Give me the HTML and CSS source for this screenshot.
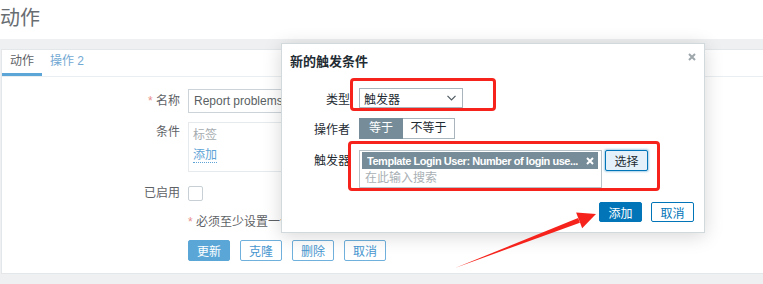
FILE: index.html
```html
<!DOCTYPE html>
<html lang="zh-CN">
<head>
  <meta charset="UTF-8" />
  <title>动作</title>
  <link rel="stylesheet" href="styles.css">
</head>
<body>

  <header class="page-header">
    <h1>动作</h1>
  </header>

  <div class="card">
    <ul class="tabs">
      <li class="tab active">动作</li>
      <li class="tab">操作 2</li>
    </ul>

    <div class="form">
      <div class="form-row">
        <label class="form-label"><span class="asterisk">*</span> 名称</label>
        <div class="text-input">Report problems to Zabbix administrators</div>
      </div>

      <div class="form-row top">
        <label class="form-label">条件</label>
        <div class="cond-box">
          <div class="cond-head">标签</div>
          <div><a class="link-dotted">添加</a></div>
        </div>
      </div>

      <div class="form-row">
        <label class="form-label">已启用</label>
        <span class="checkbox"></span>
      </div>

      <div class="form-row note-row">
        <span class="form-label"></span>
        <span class="note"><span class="asterisk">*</span> 必须至少设置一个执行内容。</span>
      </div>

      <div class="form-row">
        <span class="form-label"></span>
        <div class="btn-row">
          <button class="btn btn-main">更新</button>
          <button class="btn btn-alt">克隆</button>
          <button class="btn btn-alt">删除</button>
          <button class="btn btn-alt">取消</button>
        </div>
      </div>
    </div>
  </div>

  <!-- dialog over the page -->
  <div class="modal">
    <div class="modal-head">
      <h2>新的触发条件</h2>
      <button class="close" title="关闭">
        <svg width="8" height="8" viewBox="0 0 8 8"><path d="M1 1L7 7M7 1L1 7" stroke="#9ea7ac" stroke-width="2"/></svg>
      </button>
    </div>

    <div class="modal-form">
      <label class="m-label">类型</label>
      <div class="select">
        <span>触发器</span>
        <svg width="9" height="6" viewBox="0 0 9 6"><path d="M0.5 0.8L4.5 4.8L8.5 0.8" fill="none" stroke="#4f5a60" stroke-width="1.2"/></svg>
      </div>

      <label class="m-label">操作者</label>
      <div class="segmented">
        <span class="seg on">等于</span>
        <span class="seg seg-wide">不等于</span>
      </div>

      <label class="m-label top">触发器</label>
      <div class="ms-row">
        <div class="multiselect">
          <div class="ms-tag">
            <span class="ms-text">Template Login User: Number of login use...</span>
            <svg width="8" height="8" viewBox="0 0 8 8"><path d="M1 1L7 7M7 1L1 7" stroke="#fff" stroke-width="2"/></svg>
          </div>
          <div class="ms-placeholder">在此输入搜索</div>
        </div>
        <button class="btn btn-select">选择</button>
      </div>
    </div>

    <div class="modal-foot">
      <button class="btn btn-primary">添加</button>
      <button class="btn btn-outline">取消</button>
    </div>

    <div class="mark mark-type"></div>
    <div class="mark mark-trigger"></div>
  </div>

  <svg class="arrow" width="763" height="284" viewBox="0 0 763 284">
    <polygon points="455,268 579.9,222.7 578.1,218.1" fill="#f5231c"/>
    <polygon points="596,214 576.1,212.4 582.2,228.2" fill="#f5231c"/>
  </svg>

</body>
</html>
```

FILE: styles.css
```css
* { box-sizing: border-box; }

body {
  margin: 0;
  width: 763px;
  height: 284px;
  overflow: hidden;
  position: relative;
  background: #eef0f2;
  font-family: "Liberation Sans", "Noto Sans CJK SC", sans-serif;
  font-size: 12px;
  color: #5e6266;
}

button {
  font-family: inherit;
  font-size: 12px;
}

.page-header {
  height: 39px;
  background: #fff;
}

.page-header h1 {
  margin: 0;
  font-size: 20px;
  font-weight: normal;
  line-height: 36px;
  color: #686d72;
}

.card {
  margin: 10px 0 0 1px;
  height: 225px;
  background: #fff;
  border: 1px solid #e3e7ea;
  border-right: none;
}

.tabs {
  display: flex;
  list-style: none;
  margin: 0;
  padding: 0;
  border-bottom: 1px solid #ebeef0;
}

.tab {
  padding: 0 8px;
  line-height: 23px;
  border-bottom: 3px solid transparent;
  color: #72a9d3;
}

.tab.active {
  color: #5e6266;
  border-bottom-color: #5ba6d6;
}

.form {
  padding-top: 12px;
}

.form-row {
  display: flex;
  align-items: center;
  gap: 8px;
  min-height: 24px;
  margin-bottom: 9px;
}

.form-row.top {
  align-items: flex-start;
}

.form-label {
  width: 178px;
  flex: none;
  text-align: right;
  line-height: 20px;
}

.asterisk {
  color: #e8918e;
}

.text-input {
  width: 480px;
  height: 24px;
  padding: 0 5px;
  line-height: 22px;
  border: 1px solid #cdd4d9;
  white-space: nowrap;
  overflow: hidden;
  color: #5a5f63;
}

.cond-box {
  width: 480px;
  height: 50px;
  padding: 2px 4px;
  border: 1px solid #e6eaed;
  line-height: 20px;
}

.cond-head {
  color: #a5abaf;
}

.link-dotted {
  color: #5ea3d6;
  border-bottom: 1px dotted #5ea3d6;
}

.checkbox {
  width: 15px;
  height: 15px;
  border: 1px solid #c8d0d5;
  border-radius: 2px;
}

.note-row {
  min-height: 16px;
  margin-top: 1px;
}

.note {
  line-height: 16px;
  color: #5e6266;
}

.btn-row {
  display: flex;
  gap: 10px;
  margin-top: -1px;
}

.btn-row .btn {
  width: 42px;
}

.btn {
  height: 21px;
  width: 43px;
  padding: 0;
  border: 1px solid transparent;
  border-radius: 2px;
  cursor: pointer;
}

.btn-main {
  background: #5aa7d7;
  border-color: #5aa7d7;
  color: #fff;
}

.btn-alt {
  background: #fff;
  border-color: #6fb0dc;
  color: #4796cf;
}

/* dialog */
.modal {
  position: absolute;
  left: 281px;
  top: 43px;
  width: 424px;
  height: 190px;
  background: #fff;
  border: 1px solid #d2d9dd;
  box-shadow: 0 3px 18px rgba(0, 0, 0, 0.16);
  color: #1f2c33;
}

.modal-head {
  display: flex;
  justify-content: space-between;
  padding: 9px 7px 0 8px;
}

.modal-head h2 {
  margin: 0;
  font-size: 13px;
  line-height: 18px;
  font-weight: bold;
}

.close {
  margin-top: -3px;
  padding: 0;
  width: 10px;
  height: 10px;
  border: none;
  background: none;
}

.modal-form {
  display: grid;
  grid-template-columns: 58px auto;
  column-gap: 9px;
  row-gap: 10px;
  align-items: center;
  padding: 17px 10px 0 10px;
}

.m-label {
  text-align: right;
  white-space: nowrap;
}

.m-label.top {
  align-self: start;
  padding-top: 2px;
}

.select {
  display: flex;
  align-items: center;
  justify-content: space-between;
  width: 104px;
  height: 20px;
  padding: 0 6px 0 4px;
  border: 1px solid #a9b5bc;
}

.segmented {
  display: flex;
  height: 21px;
}

.seg {
  width: 44px;
  line-height: 19px;
  text-align: center;
  border: 1px solid #a9b5bc;
  background: #fff;
}

.seg-wide {
  width: 52px;
  border-left: none;
}

.seg.on {
  background: #768d99;
  border-color: #768d99;
  color: #fff;
}

.ms-row {
  display: flex;
  align-items: flex-start;
  gap: 3px;
  margin-top: 1px;
}

.multiselect {
  width: 243px;
  height: 38px;
  padding: 1px 3px 0 2px;
  border: 1px solid #b7c2c8;
}

.ms-tag {
  display: flex;
  align-items: center;
  justify-content: space-between;
  gap: 4px;
  height: 17px;
  padding: 0 4px 0 5px;
  background: #768d99;
  color: #fff;
  font-size: 11px;
  font-weight: bold;
  letter-spacing: -0.45px;
  white-space: nowrap;
}

.ms-text {
  min-width: 0;
  overflow: hidden;
}

.ms-tag svg {
  flex: none;
}

.ms-placeholder {
  padding-left: 3px;
  line-height: 18px;
  color: #a9b0b4;
}

.btn-select {
  background: #e5f1fa;
  border-color: #0275b8;
  color: #1f2c33;
  box-shadow: 0 0 2px 1px rgba(2, 117, 184, 0.35);
}

.modal-foot {
  display: flex;
  justify-content: flex-end;
  gap: 9px;
  padding: 14px 10px 0 0;
}

.btn-primary {
  height: 20px;
  background: #0275b8;
  border-color: #0275b8;
  color: #fff;
}

.btn-outline {
  height: 20px;
  background: #fff;
  border-color: #0275b8;
  color: #0275b8;
}

/* red annotation boxes */
.mark {
  position: absolute;
  border: 3px solid #f5231c;
  border-radius: 4px;
}

.mark-type {
  left: 68px;
  top: 34px;
  width: 146px;
  height: 33px;
}

.mark-trigger {
  left: 66px;
  top: 97px;
  width: 312px;
  height: 50px;
}

.arrow {
  position: absolute;
  left: 0;
  top: 0;
  pointer-events: none;
}
```
